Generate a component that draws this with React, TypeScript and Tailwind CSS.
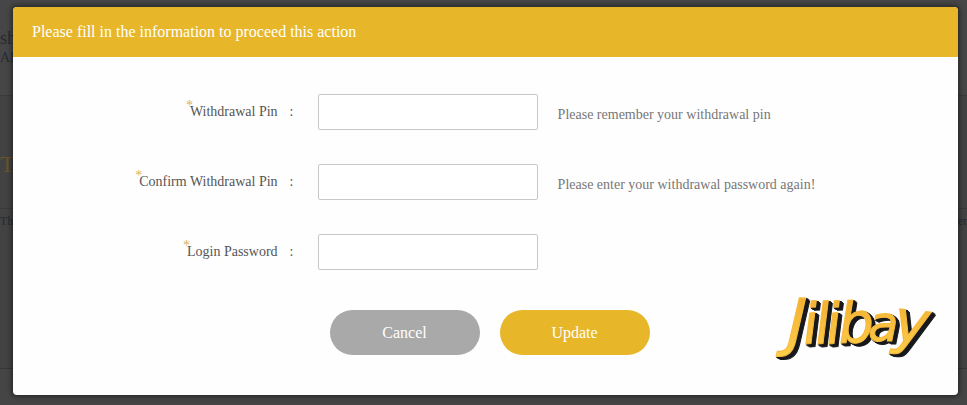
import React from 'react';

interface FieldProps {
  id: string;
  label: string;
  hint?: string;
}

function Field({ id, label, hint }: FieldProps) {
  return (
    <div className="flex items-center">
      <label htmlFor={id} className="w-[28%] shrink-0 text-right text-sm text-[#555]">
        <span className="relative">
          <span className="absolute -left-1 -top-2 text-[#d9b45c]">*</span>
          {label}
        </span>
      </label>
      <span className="w-10 shrink-0 pl-3 text-sm text-[#555]">:</span>
      <input
        id={id}
        type="password"
        className="h-9 w-[220px] shrink-0 rounded-xs border border-[#c8c8c8] bg-white px-2 text-sm outline-none"
      />
      {hint && <p className="ml-5 pt-1.5 text-sm text-[#777]">{hint}</p>}
    </div>
  );
}

function Logo() {
  return (
    <svg width="172" height="92" viewBox="0 0 172 92" role="img" aria-label="Jilibay">
      <defs>
        <linearGradient id="gold" x1="0" y1="0" x2="0" y2="1">
          <stop offset="0" stopColor="#f0a92e" />
          <stop offset="1" stopColor="#ffd04a" />
        </linearGradient>
      </defs>
      <g className="[filter:drop-shadow(1px_1px_0_#17191c)_drop-shadow(2px_1px_0_#17191c)_drop-shadow(1px_1px_0_#17191c)]">
        <text
          fill="url(#gold)"
          stroke="#f7ba3c"
          strokeWidth="1"
          className="font-['DejaVu_Sans',sans-serif] italic"
        >
          <tspan x="17" y="61" fontSize="64" rotate="2">J</tspan>
          <tspan x="34 46 57" y="61" fontSize="56" rotate="-4">ili</tspan>
          <tspan x="69" y="60" fontSize="56" rotate="-2">b</tspan>
          <tspan x="98" y="58" fontSize="50">a</tspan>
          <tspan x="122" y="58" fontSize="60" rotate="6">y</tspan>
        </text>
      </g>
    </svg>
  );
}

function Backdrop() {
  return (
    <div
      aria-hidden="true"
      className="absolute inset-0 flex flex-col overflow-hidden bg-[#464647] text-[#262a33]"
    >
      <div className="h-24 border-b border-[#3a3a3a] pt-7">
        <p className="text-lg leading-5">sh</p>
        <p className="text-sm leading-5">Al</p>
      </div>
      <div className="flex-1 border-b border-[#363636] bg-[#424242] pt-14">
        <p className="text-2xl leading-6 text-[#66542a]">Tl</p>
        <div className="mt-8 flex justify-between border-t border-[#3a3a3a] text-xs leading-6">
          <span>Th</span>
          <span>er</span>
        </div>
      </div>
      <div className="h-9 bg-[#454545]" />
    </div>
  );
}

export default function App() {
  return (
    <div className="relative min-h-screen pt-[7px] pr-[9px] pb-[10px] pl-[13px] font-['Liberation_Serif',serif]">
      <Backdrop />

      {/* Dialog */}
      <div
        role="dialog"
        aria-labelledby="dialog-title"
        className="relative overflow-hidden rounded-sm bg-[#fefefe] shadow-[0_0_4px_2px_rgba(0,0,0,0.4)]"
      >
        <header className="flex h-[50px] items-center bg-[#e7b629] px-[19px]">
          <h1 id="dialog-title" className="text-base text-white">
            Please fill in the information to proceed this action
          </h1>
        </header>

        <form className="pt-[37px] pb-10" onSubmit={(e) => e.preventDefault()}>
          <div className="flex flex-col gap-[34px]">
            <Field id="pin" label="Withdrawal Pin" hint="Please remember your withdrawal pin" />
            <Field
              id="confirm-pin"
              label="Confirm Withdrawal Pin"
              hint="Please enter your withdrawal password again!"
            />
            <Field id="password" label="Login Password" />
          </div>

          <div className="mt-10 flex gap-5 pl-[33.5%]">
            <button type="button" className="h-[45px] w-[150px] rounded-full bg-[#a9a9a9] text-base text-white">
              Cancel
            </button>
            <button type="submit" className="h-[45px] w-[150px] rounded-full bg-[#e7b629] text-base text-white">
              Update
            </button>
          </div>
        </form>

        {/* Brand mark in the corner */}
        <div className="absolute right-4 bottom-5">
          <Logo />
        </div>
      </div>
    </div>
  );
}
